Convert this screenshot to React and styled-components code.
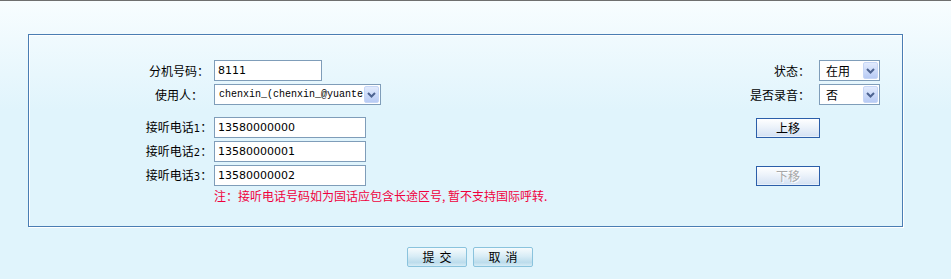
import React from 'react'
import styled, { createGlobalStyle } from 'styled-components'

const GlobalStyle = createGlobalStyle`
  html, body {
    margin: 0;
    padding: 0;
  }
  body {
    background: #e0f4fc;
    font-family: "Noto Sans CJK SC", "Liberation Sans", sans-serif;
    font-size: 12px;
    color: #000;
  }
`

const Page = styled.div`
  width: 951px;
  min-height: 278px;
  border-top: 1px solid #6f6f6f;
  padding-top: 33px;
  box-sizing: border-box;
  background: linear-gradient(#f8fdff 0, #e0f4fc 110px) no-repeat;
`

const Panel = styled.div`
  margin-left: 28px;
  width: 875px;
  height: 193px;
  box-sizing: border-box;
  border: 1px solid #4a7db3;
  box-shadow: inset 1px 1px 0 #fff, 1px 1px 0 #fff;
  padding: 25px 22px 0 116px;
`

const TopSection = styled.div`
  display: flex;
  justify-content: space-between;
`

const FieldGrid = styled.div`
  display: grid;
  grid-template-columns: ${p => p.$cols};
  grid-auto-rows: 21px;
  row-gap: 3px;
  column-gap: ${p => p.$gap || 1}px;
  align-items: center;
`

const Label = styled.div`
  text-align: ${p => p.$align || 'center'};
  white-space: nowrap;
  line-height: 21px;
`

const Digit = styled.span`
  font-family: "DejaVu Sans", sans-serif;
  font-size: 10px;
`

const TextInput = styled.div`
  width: ${p => p.$w}px;
  height: 21px;
  box-sizing: border-box;
  border: 1px solid #7f9db9;
  background: #fff;
  padding: 0 3px;
  font-family: "DejaVu Sans", sans-serif;
  font-size: 11px;
  line-height: 19px;
  white-space: nowrap;
  overflow: hidden;
`

const SelectBox = styled.div`
  width: ${p => p.$w}px;
  height: 21px;
  box-sizing: border-box;
  border: 1px solid #7f9db9;
  background: #fff;
  display: flex;
  align-items: center;
  padding: 1px;
`

const SelectText = styled.div`
  flex: 1;
  overflow: hidden;
  white-space: nowrap;
  padding-left: ${p => p.$pad || 5}px;
  font-family: ${p => p.$mono ? '"Liberation Mono", monospace' : '"Noto Sans CJK SC", sans-serif'};
  font-size: ${p => p.$mono ? 10 : 12}px;
  line-height: 17px;
`

const ArrowBox = styled.div`
  width: 15px;
  height: 17px;
  box-sizing: border-box;
  border: 1px solid #c6d6f6;
  border-radius: 2px;
  background: linear-gradient(#e2ebfd, #b8cbf5);
  display: flex;
  align-items: center;
  justify-content: center;
  flex-shrink: 0;
`

const PhoneSection = styled.div`
  margin-top: 12px;
  display: flex;
  justify-content: space-between;
  padding-right: 60px;
`

const Note = styled.div`
  grid-column: 2;
  white-space: nowrap;
  color: #f0003c;
  line-height: 14px;
  align-self: start;
`

const MoveColumn = styled.div`
  display: flex;
  flex-direction: column;
  gap: 28px;
  padding-top: 1px;
`

const MoveButton = styled.div`
  width: 64px;
  height: 20px;
  box-sizing: border-box;
  border: 1px solid #2b5ea9;
  background: linear-gradient(#ffffff 0, #eef4fb 40%, #d3e1f3 100%);
  box-shadow: inset 0 -1px 0 #e8f0fa;
  text-align: center;
  line-height: 18px;
  font-size: 12px;
  color: ${p => p.$disabled ? '#a7a7a7' : '#000'};
  text-shadow: ${p => p.$disabled ? '1px 1px 0 #fff' : 'none'};
`

const Footer = styled.div`
  margin: 20px 0 0 28px;
  width: 875px;
  padding-left: 9px;
  box-sizing: border-box;
  display: flex;
  justify-content: center;
  gap: 6px;
`

const FootButton = styled.div`
  width: 60px;
  height: 20px;
  box-sizing: border-box;
  border: 1px solid #8ac3dd;
  border-radius: 2px;
  background: linear-gradient(#f6fbfd 0, #d9edf6 45%, #bcdcec 80%, #d6ecf6 100%);
  text-align: center;
  line-height: 18px;
  letter-spacing: 5px;
  padding-left: 5px;
`

const Chevron = () => (
  <svg width="9" height="6" viewBox="0 0 9 6">
    <polyline points="1,1 4.5,4.5 8,1" fill="none" stroke="#4d6391" strokeWidth="2" />
  </svg>
)

const Select = ({ w, mono, children }) => (
  <SelectBox $w={w}>
    <SelectText $mono={mono} $pad={mono ? 3 : 5}>{children}</SelectText>
    <ArrowBox>
      <Chevron />
    </ArrowBox>
  </SelectBox>
)

const phones = ['13580000000', '13580000001', '13580000002']

export default function App() {
  return (
    <>
      <GlobalStyle />
      <Page>
        <Panel>
          <TopSection>
            <FieldGrid $cols="68px auto">
              <Label>分机号码：</Label>
              <TextInput $w={108}>8111</TextInput>
              <Label>使用人：</Label>
              <Select w={167} mono>chenxin_(chenxin_@yuante</Select>
            </FieldGrid>
            <FieldGrid $cols="auto auto" $gap={9}>
              <Label $align="right">状态：</Label>
              <Select w={61}>在用</Select>
              <Label $align="right">是否录音：</Label>
              <Select w={61}>否</Select>
            </FieldGrid>
          </TopSection>

          <PhoneSection>
            <FieldGrid $cols="68px 152px">
              {phones.map((num, i) => (
                <React.Fragment key={num}>
                  <Label>
                    接听电话<Digit>{i + 1}</Digit>：
                  </Label>
                  <TextInput $w={152}>{num}</TextInput>
                </React.Fragment>
              ))}
              <Note>注：接听电话号码如为固话应包含长途区号, 暂不支持国际呼转.</Note>
            </FieldGrid>
            <MoveColumn>
              <MoveButton>上移</MoveButton>
              <MoveButton $disabled>下移</MoveButton>
            </MoveColumn>
          </PhoneSection>
        </Panel>

        <Footer>
          <FootButton>提交</FootButton>
          <FootButton>取消</FootButton>
        </Footer>
      </Page>
    </>
  )
}
